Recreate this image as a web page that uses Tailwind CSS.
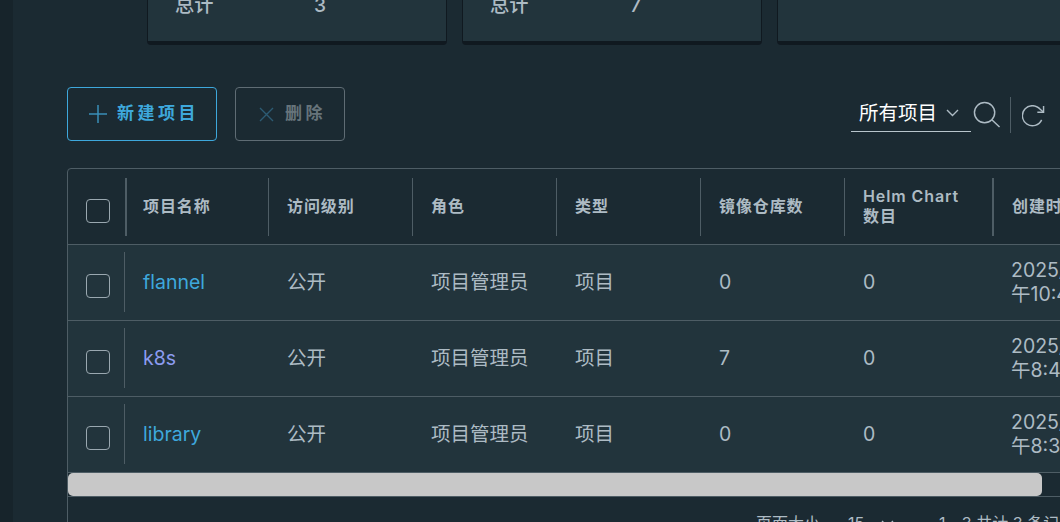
<!DOCTYPE html>
<html lang="zh-CN">
<head>
    <meta charset="UTF-8">
    <meta name="viewport" content="width=device-width, initial-scale=1.0">
    <title>项目</title>
    <script src="https://cdn.jsdelivr.net/npm/@tailwindcss/browser@4"></script>
</head>
<body class="bg-[#1b2a32] overflow-hidden font-['Inter','Noto_Sans_CJK_SC',sans-serif]">
<div class="flex w-[1060px] h-[522px] overflow-hidden">
    <!-- Sidebar edge -->
    <aside class="w-[13px] shrink-0 bg-[#17242b]"></aside>

    <main class="w-[1047px] shrink-0 pl-[54px]">
        <!-- Summary cards, scrolled partly out of view -->
        <div class="flex gap-[15px] pl-[80px] h-[45px] items-start">
            <div class="w-[300px] h-[45px] shrink-0 bg-[#22343c] border-b-[4px] border-x border-[#101920] rounded-b-[4px] flex pl-[27px] text-[19.2px] font-medium text-[#adbbc4] leading-[24px]">
                <div class="flex -mt-[7px]"><span class="w-[139px]">总计</span><span>3</span></div>
            </div>
            <div class="w-[300px] h-[45px] shrink-0 bg-[#22343c] border-b-[4px] border-x border-[#101920] rounded-b-[4px] flex pl-[27px] text-[19.2px] font-medium text-[#adbbc4] leading-[24px]">
                <div class="flex -mt-[7px]"><span class="w-[140px]">总计</span><span>7</span></div>
            </div>
            <div class="w-[300px] h-[45px] shrink-0 bg-[#22343c] border-b-[4px] border-x border-[#101920] rounded-b-[4px]"></div>
        </div>

        <!-- Toolbar -->
        <div class="flex items-center justify-between mt-[42px] h-[54px] w-[978px]">
            <div class="flex gap-[18px]">
                <button class="w-[150px] h-[54px] border border-[#3ea8dc] rounded-[4px] flex items-center pl-[21px] text-[#3ea8dc] text-[17px] font-semibold tracking-[3.5px]">
                    <svg class="w-[18px] h-[18px] mr-[10px]" viewBox="0 0 18 18" fill="none" stroke="#3a8fb8" stroke-width="1.5"><path d="M9 0v18M0 9h18"/></svg>
                    新建项目
                </button>
                <button class="w-[110px] h-[54px] border border-[#5f6c74] rounded-[4px] flex items-center pl-[23px] text-[#67747b] text-[17px] font-semibold tracking-[3.5px]">
                    <svg class="w-[15px] h-[15px] mr-[11px]" viewBox="0 0 15 15" fill="none" stroke="#2c5b73" stroke-width="1.4"><path d="M1 1l13 13M14 1L1 14"/></svg>
                    删除
                </button>
            </div>
            <div class="flex items-center">
                <div class="w-[120px] h-[36px] border-b border-[#b8c5cc] flex items-center pl-[8px] text-white text-[19.5px]">
                    <span class="w-[87px]">所有项目</span>
                    <svg class="w-[13px] h-[8px] mb-[1px]" viewBox="0 0 13 8" fill="none" stroke="#adbbc4" stroke-width="1.4"><path d="M1 1l5.5 5.5L12 1"/></svg>
                </div>
                <svg class="w-[28px] h-[28px] ml-[2px] mt-[2px]" viewBox="0 0 29 29" fill="none" stroke="#adbbc4" stroke-width="1.5"><circle cx="12" cy="12" r="10.5"/><path d="M19.5 19.5l8 7.5"/></svg>
                <div class="w-px h-[36px] bg-[#4e5d65] ml-[9px] mr-[11px] mt-[2px]"></div>
                <svg class="w-[23px] h-[23px] mt-[4px]" viewBox="0 0 24 24" fill="none" stroke="#adbbc4" stroke-width="1.5"><path d="M20.5 15.5A10.5 10.5 0 1 1 19 4.5L22.5 7.5"/><path d="M22.5 1v6.5H16"/></svg>
            </div>
        </div>

        <!-- Project table -->
        <div class="mt-[27px] w-[1100px] border border-[#4e5d65] rounded-t-[4px] text-[#adbbc4]">
            <div class="grid grid-cols-[59px_142px_144px_144px_144px_144px_149px_180px] h-[76px] border-b border-[#4e5d65] items-stretch text-[16px] font-semibold tracking-[0.9px] leading-[20px]">
                <div class="relative flex items-center pl-[18px]"><span class="block w-[24px] h-[24px] mt-[9px] border border-[#9aa8b0] rounded-[4px]"></span><span class="absolute right-0 top-[9px] w-[2px] h-[58px] bg-[#4e5d65]"></span></div>
                <div class="relative flex items-center pl-[16px] pb-[2px]">项目名称<span class="absolute right-0 top-[9px] w-px h-[58px] bg-[#4e5d65]"></span></div>
                <div class="relative flex items-center pl-[18px] pb-[2px]">访问级别<span class="absolute right-0 top-[9px] w-px h-[58px] bg-[#4e5d65]"></span></div>
                <div class="relative flex items-center pl-[18px] pb-[2px]">角色<span class="absolute right-0 top-[9px] w-px h-[58px] bg-[#4e5d65]"></span></div>
                <div class="relative flex items-center pl-[18px] pb-[2px]">类型<span class="absolute right-0 top-[9px] w-px h-[58px] bg-[#4e5d65]"></span></div>
                <div class="relative flex items-center pl-[18px] pb-[2px]">镜像仓库数<span class="absolute right-0 top-[9px] w-px h-[58px] bg-[#4e5d65]"></span></div>
                <div class="relative flex items-center pl-[18px] pr-[20px] pb-[2px]">Helm Chart 数目<span class="absolute right-0 top-[9px] w-[2px] h-[58px] bg-[#4e5d65]"></span></div>
                <div class="flex items-center pl-[18px] pb-[2px]">创建时间</div>
            </div>

            <div class="grid grid-cols-[57px_144px_144px_144px_144px_144px_148px_180px] h-[76px] bg-[#22343c] border-b border-[#4e5d65] text-[19.5px] leading-[24px] items-center">
                <div class="relative h-full flex items-center pl-[18px]"><span class="block w-[24px] h-[24px] mt-[6px] border border-[#9aa8b0] rounded-[4px]"></span><span class="absolute right-0 top-[7px] w-px h-[60px] bg-[#4e5d65]"></span></div>
                <div class="pl-[18px] pb-[2px] text-[#3ea8dc]">flannel</div>
                <div class="pl-[18px] pb-[2px]">公开</div>
                <div class="pl-[18px] pb-[2px]">项目管理员</div>
                <div class="pl-[18px] pb-[2px]">项目</div>
                <div class="pl-[18px] pb-[2px]">0</div>
                <div class="pl-[18px] pb-[2px]">0</div>
                <div class="pl-[18px] pb-[2px]">2025/3/12 上<br>午10:45</div>
            </div>
            <div class="grid grid-cols-[57px_144px_144px_144px_144px_144px_148px_180px] h-[76px] bg-[#22343c] border-b border-[#4e5d65] text-[19.5px] leading-[24px] items-center">
                <div class="relative h-full flex items-center pl-[18px]"><span class="block w-[24px] h-[24px] mt-[6px] border border-[#9aa8b0] rounded-[4px]"></span><span class="absolute right-0 top-[7px] w-px h-[60px] bg-[#4e5d65]"></span></div>
                <div class="pl-[18px] pb-[2px] text-[#8c9cf0]">k8s</div>
                <div class="pl-[18px] pb-[2px]">公开</div>
                <div class="pl-[18px] pb-[2px]">项目管理员</div>
                <div class="pl-[18px] pb-[2px]">项目</div>
                <div class="pl-[18px] pb-[2px]">7</div>
                <div class="pl-[18px] pb-[2px]">0</div>
                <div class="pl-[18px] pb-[2px]">2025/3/12 上<br>午8:45</div>
            </div>
            <div class="grid grid-cols-[57px_144px_144px_144px_144px_144px_148px_180px] h-[76px] bg-[#22343c] border-b border-[#4e5d65] text-[19.5px] leading-[24px] items-center">
                <div class="relative h-full flex items-center pl-[18px]"><span class="block w-[24px] h-[24px] mt-[6px] border border-[#9aa8b0] rounded-[4px]"></span><span class="absolute right-0 top-[7px] w-px h-[60px] bg-[#4e5d65]"></span></div>
                <div class="pl-[18px] pb-[2px] text-[#3ea8dc]">library</div>
                <div class="pl-[18px] pb-[2px]">公开</div>
                <div class="pl-[18px] pb-[2px]">项目管理员</div>
                <div class="pl-[18px] pb-[2px]">项目</div>
                <div class="pl-[18px] pb-[2px]">0</div>
                <div class="pl-[18px] pb-[2px]">0</div>
                <div class="pl-[18px] pb-[2px]">2025/3/12 上<br>午8:30</div>
            </div>

            <!-- Horizontal scrollbar -->
            <div class="h-[24px] border-b border-[#4e5d65]">
                <div class="w-[974px] h-[23px] bg-[#c8c8c8] rounded-[5px]"></div>
            </div>

            <!-- Footer -->
            <div class="flex h-[60px] pl-[688px] pt-[16px] text-[16px] leading-[20px]">
                <span class="w-[92px]">页面大小</span>
                <span class="w-[33px]">15</span>
                <svg class="w-[13px] h-[8px] mt-[7px]" viewBox="0 0 13 8" fill="none" stroke="#adbbc4" stroke-width="1.4"><path d="M1 1l5.5 5.5L12 1"/></svg>
                <span class="ml-[45px]">1 - 3 共计 3 条记录</span>
            </div>
        </div>
    </main>
</div>
</body>
</html>
